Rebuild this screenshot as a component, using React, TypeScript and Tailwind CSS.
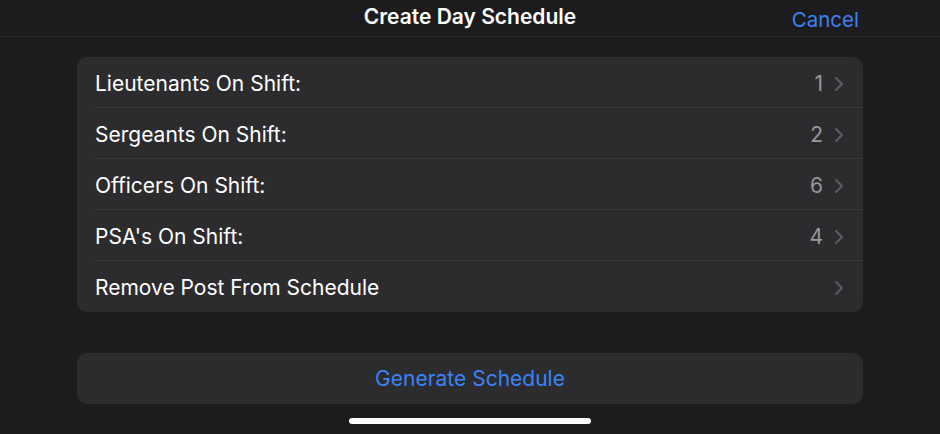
import React from "react";

const rows = [
  { label: "Lieutenants On Shift:", value: "1" },
  { label: "Sergeants On Shift:", value: "2" },
  { label: "Officers On Shift:", value: "6" },
  { label: "PSA's On Shift:", value: "4" },
  { label: "Remove Post From Schedule", value: "" },
];

function Chevron() {
  return (
    <svg width="10" height="16" viewBox="0 0 10 16" fill="none">
      <path d="M2 2 L8 8 L2 14" stroke="#5b5b60" strokeWidth="2.2" strokeLinecap="round" strokeLinejoin="round" />
    </svg>
  );
}

export default function App() {
  return (
    <div
      className="w-[940px] h-[434px] bg-[#1c1c1e] flex flex-col overflow-hidden"
      style={{ fontFamily: "Inter, 'Liberation Sans', sans-serif" }}
    >
      <div className="h-[37px] shrink-0 border-b border-[#2c2c2e] relative flex items-center justify-center">
        <span className="text-white text-[21px] font-semibold -mt-[3px]">Create Day Schedule</span>
        <span className="absolute right-[81px] top-[5px] text-[#3b82f7] text-[20.5px]">Cancel</span>
      </div>
      <div className="px-[77px] pt-[20px]">
        <div className="bg-[#2c2c2e] rounded-[10px] overflow-hidden">
          {rows.map((r, i) => (
            <div key={r.label} className="pl-[18px]">
              <div
                className={
                  "h-[51px] flex items-center pr-[19px] pt-[3px] " +
                  (i < rows.length - 1 ? "border-b border-[#3a3a3c]" : "")
                }
              >
                <span className="text-white text-[21px] flex-1">{r.label}</span>
                {r.value && <span className="text-[#98989d] text-[21px] mr-[11px]">{r.value}</span>}
                <Chevron />
              </div>
            </div>
          ))}
        </div>
        <div className="mt-[41px] h-[51px] bg-[#2c2c2e] rounded-[10px] flex items-center justify-center">
          <span className="text-[#3b82f7] text-[21px]">Generate Schedule</span>
        </div>
        <div className="flex justify-center mt-[14px]">
          <div className="w-[242px] h-[6px] rounded-full bg-white" />
        </div>
      </div>
    </div>
  );
}
